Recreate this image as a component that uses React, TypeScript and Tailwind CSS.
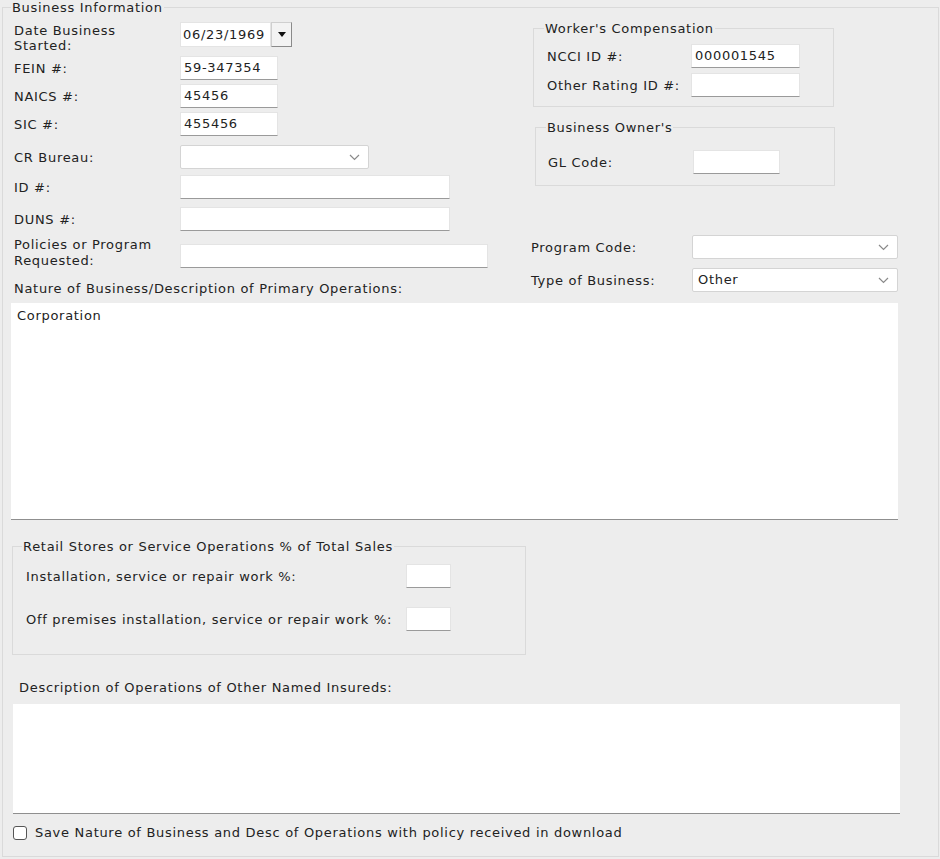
import React from "react";

function TextBox({ value = "", w, className = "" }: { value?: string; w: string; className?: string }) {
  return (
    <div
      className={`${w} ${className} h-[24px] shrink-0 bg-white border border-[#e4e4e4] border-b-[#9a9a9a] px-[3px] leading-[22px] whitespace-nowrap`}
    >
      {value}
    </div>
  );
}

function Chevron() {
  return (
    <svg width="11" height="7" viewBox="0 0 11 7" className="shrink-0">
      <path d="M1 1 L5.5 5.5 L10 1" fill="none" stroke="#8a8a8a" strokeWidth="1.2" />
    </svg>
  );
}

function Select({ value = "", w }: { value?: string; w: string }) {
  return (
    <div
      className={`${w} h-[24px] bg-white border border-[#d4d4d4] rounded-[2px] flex items-center justify-between pl-[5px] pr-[8px]`}
    >
      <span>{value}</span>
      <Chevron />
    </div>
  );
}

function Label({ children, w, className = "" }: { children: React.ReactNode; w: string; className?: string }) {
  return <div className={`${w} ${className} shrink-0 leading-[15px]`}>{children}</div>;
}

export default function App() {
  return (
    <div className="min-h-[859px] bg-[#ededed] font-['DejaVu_Sans',Verdana,sans-serif] text-[13px] tracking-[0.7px] text-[#222]">
      <fieldset className="ml-[2px] w-[937px] border border-[#dadada] pb-[16px]">
        <legend className="ml-[8px] px-[1px] leading-[15px]">Business Information</legend>

        <div className="flex items-start pl-[11px] h-[281px]">
          {/* left column */}
          <div className="w-[517px] flex flex-col">
            <div className="mt-[7px] flex items-start">
              <Label w="w-[166px]" className="pt-[1px]">
                Date Business
                <br />
                Started:
              </Label>
              <div className="flex h-[25px]">
                <div className="w-[91px] bg-white border border-[#e4e4e4] px-[2px] leading-[23px]">06/23/1969</div>
                <div className="w-[21px] bg-[#f3f3f3] border border-[#cfcfcf] border-r-[#8a8a8a] border-b-[#8a8a8a] flex items-center justify-center">
                  <svg width="8" height="5" viewBox="0 0 8 5">
                    <path d="M0 0 H8 L4 5 Z" fill="#111" />
                  </svg>
                </div>
              </div>
            </div>
            <div className="mt-[3px] flex items-center">
              <Label w="w-[166px]">FEIN #:</Label>
              <TextBox w="w-[98px]" value="59-347354" />
            </div>
            <div className="mt-[4px] flex items-center">
              <Label w="w-[166px]">NAICS #:</Label>
              <TextBox w="w-[98px]" value="45456" />
            </div>
            <div className="mt-[4px] flex items-center">
              <Label w="w-[166px]">SIC #:</Label>
              <TextBox w="w-[98px]" value="455456" />
            </div>
            <div className="mt-[9px] flex items-center">
              <Label w="w-[166px]">CR Bureau:</Label>
              <Select w="w-[189px]" />
            </div>
            <div className="mt-[6px] flex items-center">
              <Label w="w-[166px]">ID #:</Label>
              <TextBox w="w-[270px]" />
            </div>
            <div className="mt-[8px] flex items-center">
              <Label w="w-[166px]">DUNS #:</Label>
              <TextBox w="w-[270px]" />
            </div>
            <div className="mt-[6px] flex items-start">
              <div className="w-[166px] shrink-0 leading-[16px]">
                Policies or Program
                <br />
                Requested:
              </div>
              <TextBox w="w-[308px]" className="mt-[7px]" />
            </div>
            <div className="mt-[12px] leading-[15px] whitespace-nowrap">
              Nature of Business/Description of Primary Operations:
            </div>
          </div>

          {/* right column */}
          <div className="flex flex-col">
            <fieldset className="mt-[6px] ml-[2px] w-[301px] border border-[#dadada] pl-[13px] pb-[9px]">
              <legend className="-ml-[3px] px-[1px] leading-[15px]">Worker's Compensation</legend>
              <div className="mt-[8px] flex items-center">
                <Label w="w-[144px]">NCCI ID #:</Label>
                <TextBox w="w-[109px]" value="000001545" />
              </div>
              <div className="mt-[5px] flex items-center">
                <Label w="w-[144px]">Other Rating ID #:</Label>
                <TextBox w="w-[109px]" />
              </div>
            </fieldset>
            <fieldset className="mt-[13px] ml-[4px] w-[300px] border border-[#dadada] pl-[12px] pb-[11px]">
              <legend className="-ml-[2px] px-[1px] leading-[15px]">Business Owner's</legend>
              <div className="mt-[15px] flex items-center">
                <Label w="w-[145px]">GL Code:</Label>
                <TextBox w="w-[87px]" />
              </div>
            </fieldset>
            <div className="mt-[49px] flex items-center">
              <Label w="w-[161px]">Program Code:</Label>
              <Select w="w-[206px]" />
            </div>
            <div className="mt-[9px] flex items-center">
              <Label w="w-[161px]">Type of Business:</Label>
              <Select w="w-[206px]" value="Other" />
            </div>
          </div>
        </div>

        <div className="mt-[7px] ml-[8px] w-[887px] h-[217px] bg-white border-b border-[#8f8f8f] px-[6px] pt-[5px] leading-[15px]">
          Corporation
        </div>

        <fieldset className="mt-[19px] ml-[9px] w-[514px] border border-[#dadada] pl-[13px] pb-[23px]">
          <legend className="-ml-[4px] px-[1px] leading-[15px]">Retail Stores or Service Operations % of Total Sales</legend>
          <div className="mt-[10px] flex items-center">
            <Label w="w-[380px]">Installation, service or repair work %:</Label>
            <TextBox w="w-[45px]" />
          </div>
          <div className="mt-[19px] flex items-center">
            <Label w="w-[380px]">Off premises installation, service or repair work %:</Label>
            <TextBox w="w-[45px]" />
          </div>
        </fieldset>

        <div className="mt-[25px] ml-[16px] leading-[15px]">Description of Operations of Other Named Insureds:</div>
        <div className="mt-[9px] ml-[10px] w-[887px] h-[110px] bg-white border-b border-[#8f8f8f]" />

        <label className="mt-[11px] ml-[10px] flex items-center gap-[8px] leading-[15px]">
          <span className="w-[14px] h-[14px] bg-white border border-[#555] rounded-[3px] shrink-0" />
          Save Nature of Business and Desc of Operations with policy received in download
        </label>
      </fieldset>
    </div>
  );
}
